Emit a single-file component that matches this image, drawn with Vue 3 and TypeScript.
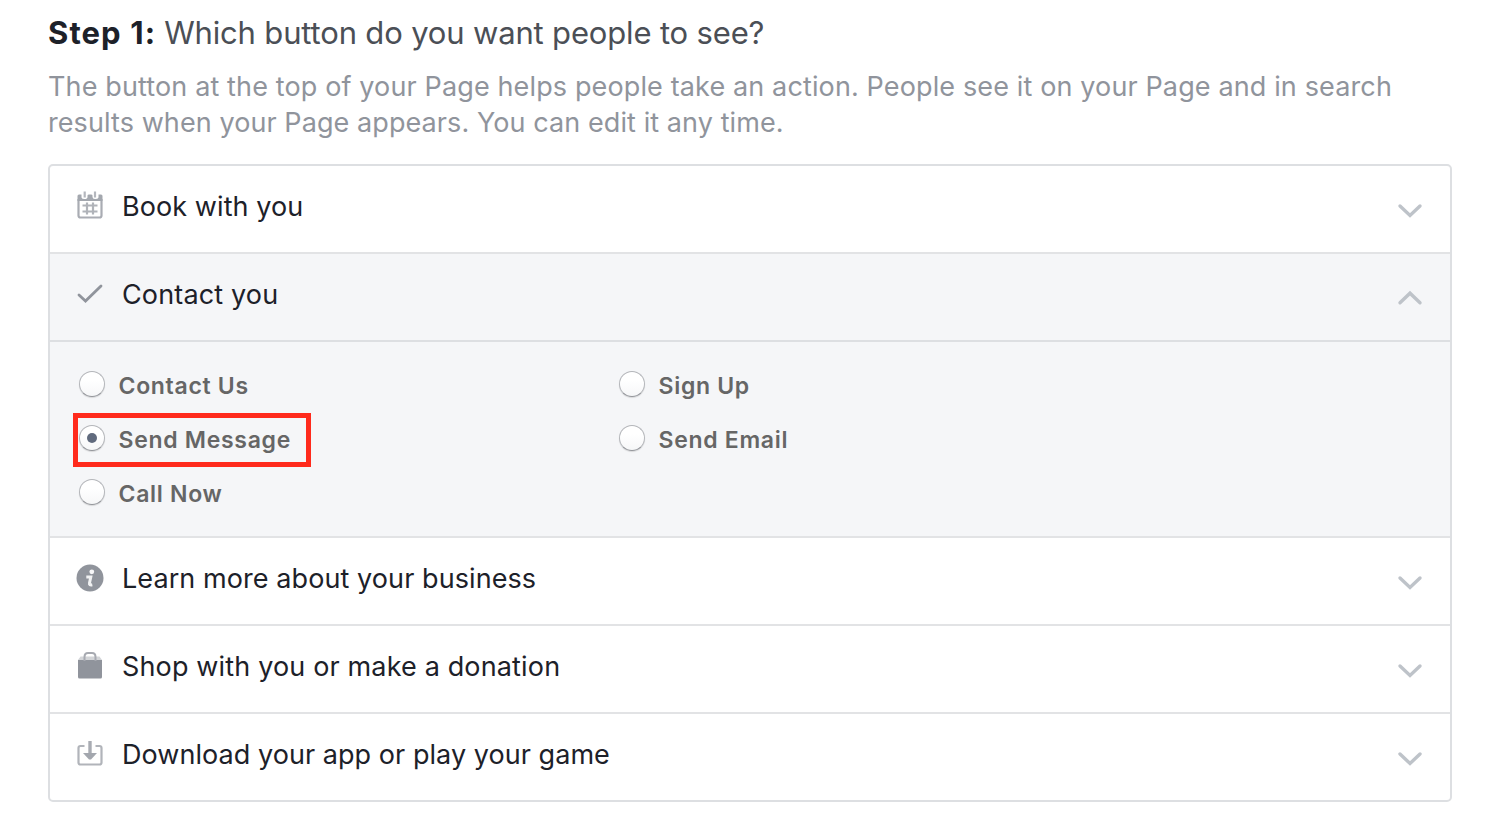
<script setup lang="ts">
import { ref } from 'vue'

interface Section {
  id: string
  label: string
  options?: string[][]
}

const sections: Section[] = [
  { id: 'book', label: 'Book with you' },
  {
    id: 'contact',
    label: 'Contact you',
    options: [['Contact Us', 'Send Message', 'Call Now'], ['Sign Up', 'Send Email']],
  },
  { id: 'learn', label: 'Learn more about your business' },
  { id: 'shop', label: 'Shop with you or make a donation' },
  { id: 'download', label: 'Download your app or play your game' },
]

const open = ref('contact')
const selected = ref('Send Message')

function toggle(id: string) {
  open.value = open.value === id ? '' : id
}
</script>

<template>
  <main class="page">
    <h1 class="title"><strong>Step 1:</strong><span>Which button do you want people to see?</span></h1>
    <p class="intro">
      <span class="line first">The button at the top of your Page helps people take an action. People see it on your Page and in search</span>
      <span class="line second">results when your Page appears. You can edit it any time.</span>
    </p>
    <div class="panel">
      <section v-for="s in sections" :key="s.id" class="section" :class="{ open: open === s.id }">
        <div class="row" @click="toggle(s.id)">
          <svg class="icon" viewBox="0 0 32 32" fill="none">
            <g v-if="s.id === 'book'">
              <path d="M4.500 9V25.500Q4.500 27.500 6.500 27.500H25.500Q27.500 27.500 27.500 25.500V9" stroke="#a9acb3" stroke-width="2.200" />
              <path d="M3.500 6Q3.500 4.500 5 4.500H7.500V7.500Q8 9 10.500 9Q13.500 9 13.500 7V5.500Q13.500 4.500 15 4.500H17Q18.500 4.500 18.500 5.500V7Q18.500 9 21 9Q24 9 24.500 7.500V4.500H27Q28.500 4.500 28.500 6V11H3.500Z" fill="#a3a7ae" />
              <path d="M10.700 1.500V7.500M21 1.500V7.500" stroke="#b4b7bd" stroke-width="2.200" />
              <path d="M13 12.500V24.500M19 12.500V24.500M8.500 15.500H23.500M8.500 21.500H23.500" stroke="#b0b3b9" stroke-width="2.200" />
            </g>
            <path v-else-if="s.id === 'contact'" d="M5 17L11.500 23L27 8" stroke="#90949c" stroke-width="2.800" stroke-linecap="round" />
            <g v-else-if="s.id === 'learn'">
              <circle cx="16" cy="16" r="13.500" fill="#90949c" />
              <circle cx="17.800" cy="9.800" r="2.400" fill="#f7f7f8" />
              <path d="M12.300 15H16.800L15.500 21Q15 23.500 18.300 22.800" stroke="#f0f1f2" stroke-width="3" />
            </g>
            <g v-else-if="s.id === 'shop'">
              <path d="M4 10H28V27Q28 28.500 26.500 28.500H5.500Q4 28.500 4 27Z" fill="#90949c" />
              <path d="M4 10L6.500 6.500H25.500L28 10Z" fill="#d3d5d8" />
              <path d="M10.500 11V7Q10.500 3 14 3H18Q21.500 3 21.500 7V11" stroke="#a7aab1" stroke-width="2" />
            </g>
            <g v-else>
              <path d="M10.500 8H6.500Q4.500 8 4.500 10V24.500Q4.500 26.500 6.500 26.500H25.500Q27.500 26.500 27.500 24.500V10Q27.500 8 25.500 8H21.500" stroke="#b1b4ba" stroke-width="2.200" />
              <path d="M16 3V16" stroke="#a9acb3" stroke-width="3.400" />
              <path d="M9 15H23L17 21.500H15Z" fill="#a3a7ae" />
            </g>
          </svg>
          <span class="label" :class="s.id">{{ s.label }}</span>
          <svg class="chevron" viewBox="0 0 28 18" fill="none">
            <path :d="open === s.id ? 'M4 12.800L14 3.200L24 12.800' : 'M4 4L14 13.500L24 4'" stroke="#bec3c9" stroke-width="3.400" stroke-linecap="round" />
          </svg>
        </div>
        <div v-if="s.options && open === s.id" class="options">
          <div v-for="(column, c) in s.options" :key="c" class="column">
            <label v-for="o in column" :key="o" class="option" :class="{ chosen: selected === o }" @click="selected = o">
              <span class="radio"><i v-if="selected === o" /></span>
              <span class="name">{{ o }}</span>
            </label>
          </div>
        </div>
      </section>
    </div>
  </main>
</template>

<style>
body {
  background: #fff;
}
</style>

<style scoped>
.page {
  box-sizing: border-box;
  width: 1492px;
  height: 824px;
  padding: 13px 40px 0 48px;
  overflow: hidden;
  font-family: Inter, "Liberation Sans", sans-serif;
}
.title {
  display: flex;
  gap: 8px;
  margin: 0;
  font-size: 31px;
  line-height: 40px;
  font-weight: 400;
  color: #4b4f56;
  letter-spacing: -0.16px;
  white-space: nowrap;
}
.title strong {
  font-weight: 700;
  color: #1d2129;
  letter-spacing: 1.1px;
}
.intro {
  margin: 16px 0 0;
  font-size: 27px;
  line-height: 36px;
  color: #90949c;
}
.line {
  display: block;
  white-space: nowrap;
}
.first {
  letter-spacing: 0.13px;
}
.second {
  letter-spacing: 0.08px;
}
.panel {
  box-sizing: border-box;
  width: 1404px;
  margin-top: 23px;
  border: 2px solid #dddfe2;
  border-radius: 5px;
  overflow: hidden;
}
.section + .section {
  border-top: 2px solid #e2e3e5;
}
.section.open {
  background: #f5f6f8;
}
.row {
  display: flex;
  align-items: center;
  box-sizing: border-box;
  height: 86px;
  padding: 0 26px 4px 24px;
  cursor: pointer;
}
.icon {
  width: 32px;
  height: 32px;
  margin-top: -2px;
}
.label {
  flex: 1;
  margin-left: 16px;
  font-size: 27px;
  line-height: 36px;
  color: #1d2129;
  letter-spacing: 0.08px;
  white-space: nowrap;
}
.label.contact,
.label.shop {
  letter-spacing: 0.15px;
}
.label.download {
  letter-spacing: 0.05px;
}
.chevron {
  width: 28px;
  height: 18px;
  margin-top: 7px;
}
.options {
  display: flex;
  box-sizing: border-box;
  height: 196px;
  padding: 15px 29px 0;
  border-top: 2px solid #dddfe2;
}
.column {
  display: flex;
  flex-direction: column;
  align-items: flex-start;
  width: 540px;
}
.option {
  position: relative;
  display: flex;
  align-items: center;
  gap: 13.5px;
  height: 54px;
  cursor: pointer;
}
.option.chosen::after {
  content: "";
  position: absolute;
  top: 2px;
  bottom: -2px;
  left: -6px;
  width: 228px;
  border: 5px solid #ff2a1c;
}
.radio {
  display: flex;
  align-items: center;
  justify-content: center;
  box-sizing: border-box;
  width: 26px;
  height: 26px;
  border: 1px solid #b4b6ba;
  border-bottom-color: #93959a;
  border-radius: 50%;
  background: linear-gradient(#fff 35%, #f6f7f8);
  box-shadow: 0 1px 1px rgba(0, 0, 0, 0.12);
}
.radio i {
  width: 10px;
  height: 10px;
  border-radius: 50%;
  background: #606a7d;
}
.name {
  margin-top: 3px;
  font-size: 23px;
  line-height: 30px;
  font-weight: 600;
  color: #666;
  letter-spacing: 0.7px;
  white-space: nowrap;
}
</style>
